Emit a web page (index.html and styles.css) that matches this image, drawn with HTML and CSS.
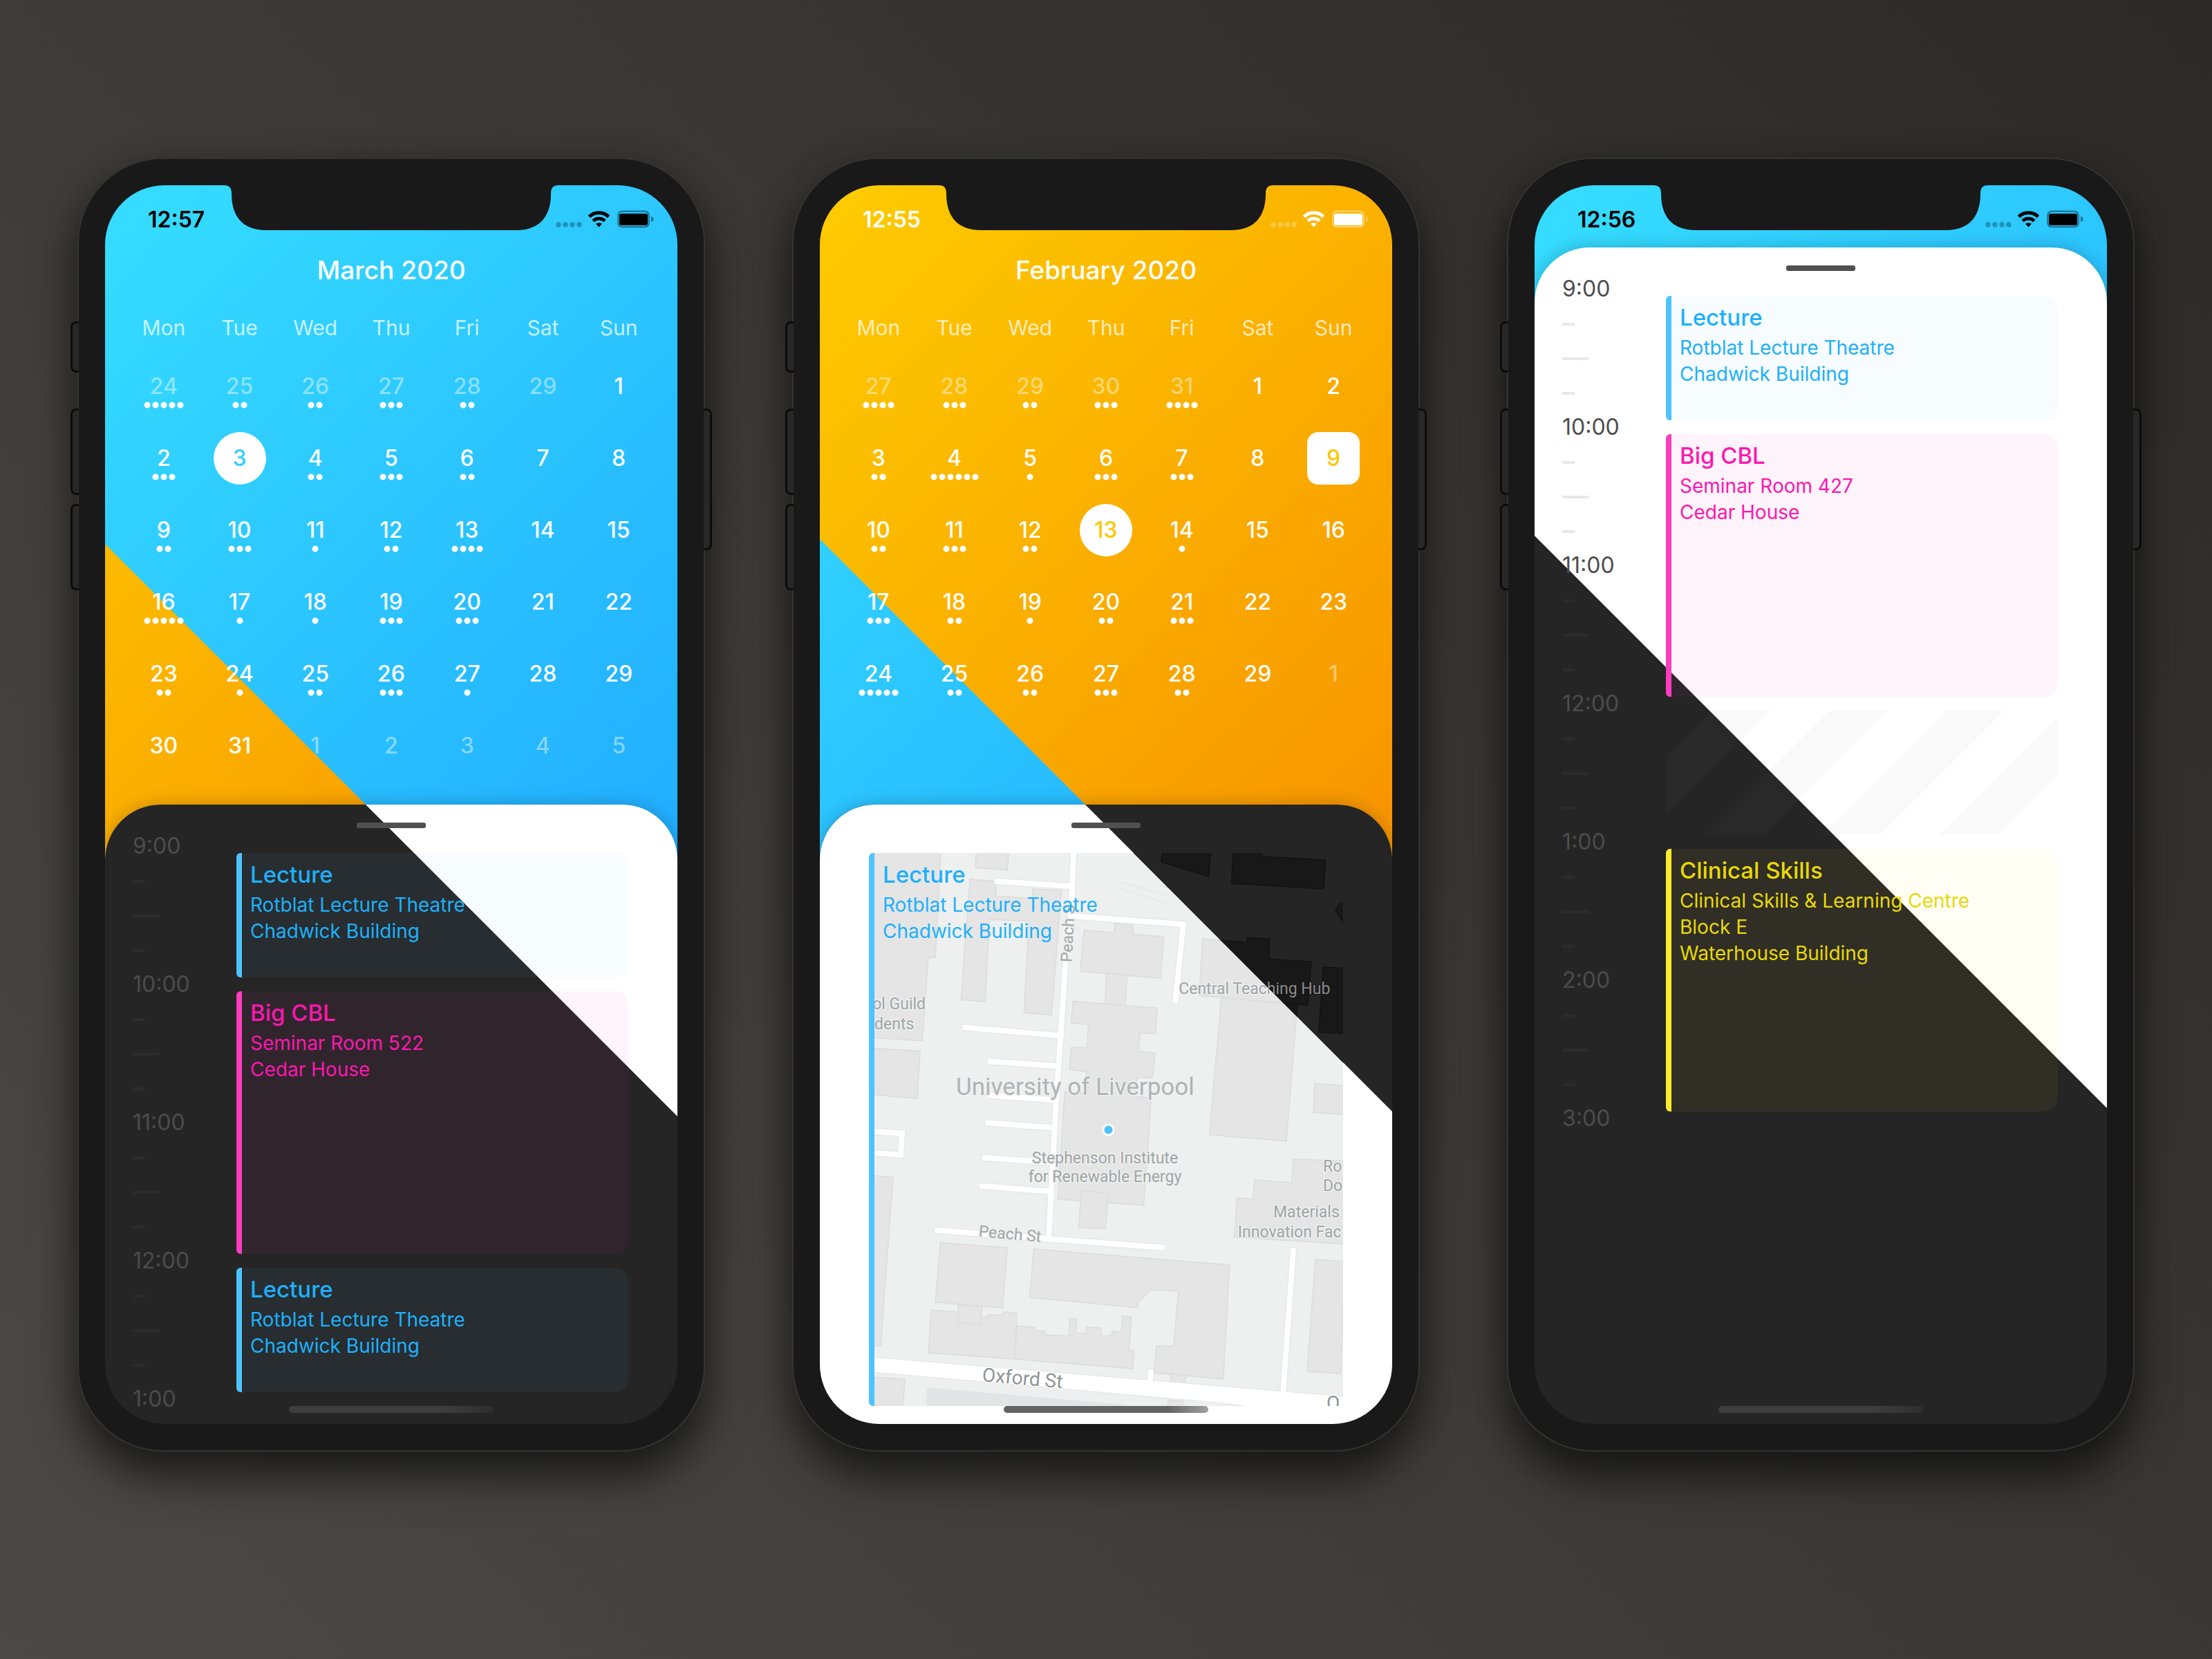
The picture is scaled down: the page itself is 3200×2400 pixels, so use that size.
FILE: index.html
```html
<!DOCTYPE html>
<html lang="en">
<head>
<meta charset="utf-8">
<title>Timetable themes</title>
<link rel="stylesheet" href="styles.css">
</head>
<body>
<svg class="defs" aria-hidden="true">
  <symbol id="notch" viewBox="0 0 484 66">
    <path d="M0 0C8 0 11 4 11 12C11 42 24 65 62 65H422C460 65 473 42 473 12C473 4 476 0 484 0Z"/>
  </symbol>
  <symbol id="status" viewBox="0 0 142 26">
    <g fill="currentColor" opacity=".28"><circle cx="4" cy="21" r="3.7"/><circle cx="14" cy="21" r="3.7"/><circle cx="24" cy="21" r="3.7"/><circle cx="34" cy="21" r="3.7"/></g>
    <path d="M48.500 9.500A20 20 0 0 1 76.500 9.500" fill="none" stroke="currentColor" stroke-width="5"/>
    <path d="M54 15.500A12.500 12.500 0 0 1 71 15.500" fill="none" stroke="currentColor" stroke-width="4.600"/>
    <path d="M58 19.800Q62.500 16.500 67 19.800L62.500 24.500Z" fill="currentColor"/>
    <path d="M97 .5H128Q136 .5 136 8.500V17.500Q136 25.500 128 25.500H97Q89 25.500 89 17.500V8.500Q89 .5 97 .5ZM97 3Q91.500 3 91.500 8.500V17.500Q91.500 23 97 23H128Q133.500 23 133.500 17.500V8.500Q133.500 3 128 3Z" fill="currentColor" fill-rule="evenodd" opacity=".38"/>
    <rect x="92" y="5" width="41" height="17" rx="3" fill="currentColor"/>
    <path d="M138 9Q141.500 10 141.500 13T138 17Z" fill="currentColor" opacity=".4"/>
  </symbol>
  <symbol id="campus" viewBox="0 0 677 800">
    <rect class="ground" width="677" height="800"/>
    <path class="park" d="M76 772L364 797V800H75Z"/>
    <path class="faint" d="M353 41L424 62M353 51L422 73M408 46L424 50"/>
    <g class="building">
      <path d="M-2 -2H82L96 3L88 151L78 151L69 271L-2 267Z"/>
      <path d="M147 -2H194L192 25L146 21Z"/>
      <path d="M138 38L176 41L175 62L227 66L229 52L270 54L256 234L216 231L223 98L166 96L160 215L125 212Z"/>
      <path d="M-2 282L66 286L62 355L-2 349Z"/>
      <path d="M-2 466L27 468L9 712H-2Z"/>
      <path d="M-2 757L44 760L41 802H-2Z"/>
      <path d="M303 111L346 115L347 102L374 103L373 117L418 121L413 181L297 171Z"/>
      <path d="M335 174L365 176L362 221L333 219Z"/>
      <path d="M287 214L409 224L406 261L384 260L381 286L405 289L402 325L379 324L378 352L400 354L389 509L265 500L275 345L304 347L306 316L282 313L284 281L307 281L309 248L284 246Z"/>
      <path d="M299 488L338 491L334 543L295 541Z"/>
      <path d="M501 209L611 219L595 416L484 407Z"/>
      <path d="M474 124L539 129V122L571 124L570 153L631 157L626 220L469 206Z"/>
      <path d="M648 165L679 166V261L642 259Z"/>
      <path d="M416 -2H486L483 34L414 13Z"/>
      <path d="M518 -2H560V5L652 10L649 52L516 44Z"/>
      <path d="M672 73H679V105L666 83Z"/>
      <path d="M636 333L679 336V378L634 375Z"/>
      <path d="M605 442L679 445V565L520 555L524 498L547 500L549 472L603 476Z"/>
      <path d="M637 587L679 590L674 752L625 749Z"/>
      <path d="M95 563L192 570L185 657L88 649Z"/>
      <path d="M230 572L513 595L504 760L404 751L407 712L432 712L439 633L399 631L381 649V657L224 642Z"/>
      <path d="M82 660L121 663L156 670H164V667L185 667V663L206 665L202 731L78 722Z"/>
      <path d="M121 653L156 655L153 681L121 679Z"/>
      <path d="M206 683L231 685V689L246 691V696L281 698L282 672L292 673L291 694H306V685L327 686V698L343 697V691L357 692L358 669L371 670L368 718L375 719L373 745L202 731Z"/>
      <path d="M429 752L450 755L448 768H428Z"/>
    </g>
    <path class="casing" d="M288 -5L284 86L276 160L262 366L252 553M177 41L283 48M288 91L446 103L435 214M131 252L270 264M167 301L266 308M166 350L262 357M164 390L260 397M159 440L256 447M155 481L254 489M91 545L416 570M605 574L590 785M399 750L398 768M-5 402L40 405L38 436L-5 433"/>
    <path class="oxford" d="M-2 728L586 777L679 785V802H560L484 793L-2 750Z"/>
    <path class="road" d="M288 -5L284 86L276 160L262 366L252 553M177 41L283 48M288 91L446 103L435 214M131 252L270 264M167 301L266 308M166 350L262 357M164 390L260 397M159 440L256 447M155 481L254 489M91 545L416 570M605 574L590 785M399 750L398 768M-5 402L40 405L38 436L-5 433"/>
    <path class="building" d="M424 790L446 792V802H424Z"/>
  </symbol>
</svg>

<main class="stage">
  <section class="phone" aria-label="March timetable">
    <span class="key key-mute"></span><span class="key key-up"></span><span class="key key-down"></span><span class="key key-power"></span>
    <div class="screen blue split-a">
      <svg class="notch"><use href="#notch"/></svg>
      <header class="status-bar"><time>12:57</time><svg class="status-icons"><use href="#status"/></svg></header>
      <div class="calendar">
        <h1 class="month">March 2020</h1>
        <table class="days">
          <thead><tr><th>Mon</th><th>Tue</th><th>Wed</th><th>Thu</th><th>Fri</th><th>Sat</th><th>Sun</th></tr></thead>
          <tbody>
            <tr><td><button class="day out d5">24</button></td><td><button class="day out d2">25</button></td><td><button class="day out d2">26</button></td><td><button class="day out d3">27</button></td><td><button class="day out d2">28</button></td><td><button class="day out">29</button></td><td><button class="day">1</button></td></tr>
            <tr><td><button class="day d3">2</button></td><td><button class="day selected">3</button></td><td><button class="day d2">4</button></td><td><button class="day d3">5</button></td><td><button class="day d2">6</button></td><td><button class="day">7</button></td><td><button class="day">8</button></td></tr>
            <tr><td><button class="day d2">9</button></td><td><button class="day d3">10</button></td><td><button class="day d1">11</button></td><td><button class="day d2">12</button></td><td><button class="day d4">13</button></td><td><button class="day">14</button></td><td><button class="day">15</button></td></tr>
            <tr><td><button class="day d5">16</button></td><td><button class="day d1">17</button></td><td><button class="day d1">18</button></td><td><button class="day d3">19</button></td><td><button class="day d3">20</button></td><td><button class="day">21</button></td><td><button class="day">22</button></td></tr>
            <tr><td><button class="day d2">23</button></td><td><button class="day d1">24</button></td><td><button class="day d2">25</button></td><td><button class="day d3">26</button></td><td><button class="day d1">27</button></td><td><button class="day">28</button></td><td><button class="day">29</button></td></tr>
            <tr><td><button class="day">30</button></td><td><button class="day">31</button></td><td><button class="day out">1</button></td><td><button class="day out">2</button></td><td><button class="day out">3</button></td><td><button class="day out">4</button></td><td><button class="day out">5</button></td></tr>
          </tbody>
        </table>
      </div>
      <div class="sheet">
        <div class="grabber"></div>
        <div class="plan">
          <ol class="hours"><li>9:00</li><li>10:00</li><li>11:00</li><li>12:00</li><li>1:00</li></ol>
          <div class="events">
            <article class="event lecture"><h2>Lecture</h2><p>Rotblat Lecture Theatre</p><p>Chadwick Building</p></article>
            <article class="event cbl long"><h2>Big CBL</h2><p>Seminar Room 522</p><p>Cedar House</p></article>
            <article class="event lecture"><h2>Lecture</h2><p>Rotblat Lecture Theatre</p><p>Chadwick Building</p></article>
          </div>
        </div>
      </div>
      <div class="home"></div>
    </div>
  </section>

  <section class="phone" aria-label="February timetable">
    <span class="key key-mute"></span><span class="key key-up"></span><span class="key key-down"></span><span class="key key-power"></span>
    <div class="screen orange split-b">
      <svg class="notch"><use href="#notch"/></svg>
      <header class="status-bar"><time>12:55</time><svg class="status-icons"><use href="#status"/></svg></header>
      <div class="calendar">
        <h1 class="month">February 2020</h1>
        <table class="days">
          <thead><tr><th>Mon</th><th>Tue</th><th>Wed</th><th>Thu</th><th>Fri</th><th>Sat</th><th>Sun</th></tr></thead>
          <tbody>
            <tr><td><button class="day out d4">27</button></td><td><button class="day out d3">28</button></td><td><button class="day out d2">29</button></td><td><button class="day out d3">30</button></td><td><button class="day out d4">31</button></td><td><button class="day">1</button></td><td><button class="day">2</button></td></tr>
            <tr><td><button class="day d2">3</button></td><td><button class="day d6">4</button></td><td><button class="day d1">5</button></td><td><button class="day d3">6</button></td><td><button class="day d3">7</button></td><td><button class="day">8</button></td><td><button class="day today">9</button></td></tr>
            <tr><td><button class="day d2">10</button></td><td><button class="day d3">11</button></td><td><button class="day d2">12</button></td><td><button class="day selected">13</button></td><td><button class="day d1">14</button></td><td><button class="day">15</button></td><td><button class="day">16</button></td></tr>
            <tr><td><button class="day d3">17</button></td><td><button class="day d2">18</button></td><td><button class="day d1">19</button></td><td><button class="day d2">20</button></td><td><button class="day d3">21</button></td><td><button class="day">22</button></td><td><button class="day">23</button></td></tr>
            <tr><td><button class="day d5">24</button></td><td><button class="day d2">25</button></td><td><button class="day d2">26</button></td><td><button class="day d3">27</button></td><td><button class="day d2">28</button></td><td><button class="day">29</button></td><td><button class="day out">1</button></td></tr>
          </tbody>
        </table>
      </div>
      <div class="sheet">
        <div class="grabber"></div>
        <article class="event lecture place">
          <svg class="map" viewBox="0 0 677 800" preserveAspectRatio="xMinYMin slice" role="img" aria-label="Campus map">
            <clipPath id="lower"><path d="M0 0H374L677 303V800H0Z"/></clipPath>
            <clipPath id="upper"><path d="M374 0H677V303Z"/></clipPath>
            <g clip-path="url(#lower)"><use class="map-light" href="#campus" width="677" height="800"/></g>
            <g clip-path="url(#upper)"><use class="map-dark" href="#campus" width="677" height="800"/></g>
            <circle cx="338" cy="400" r="9" fill="#fff"/><circle cx="338" cy="400" r="6" fill="#4dc3ff"/>
            <g class="labels">
              <text class="area" x="290" y="349" text-anchor="middle">University of Liverpool</text>
              <g clip-path="url(#lower)"><text x="549" y="204" text-anchor="middle">Central Teaching Hub</text></g>
              <g clip-path="url(#upper)" aria-hidden="true"><text class="night" x="549" y="204" text-anchor="middle">Central Teaching Hub</text></g>
              <text x="333" y="448" text-anchor="middle">Stephenson Institute</text>
              <text x="333" y="475" text-anchor="middle">for Renewable Energy</text>
              <text x="648" y="460">Ro</text>
              <text x="648" y="488">Do</text>
              <text x="624" y="526" text-anchor="middle">Materials</text>
              <text x="525" y="555">Innovation Fac</text>
              <text x="74" y="226" text-anchor="end">ol Guild</text>
              <text x="0" y="255">dents</text>
              <text transform="translate(150 554) rotate(5)">Peach St</text>
              <text transform="translate(285 158) rotate(-87)">Peach S</text>
              <text class="street" transform="translate(155 763) rotate(5)">Oxford St</text>
              <text class="street" x="653" y="804">O</text>
            </g>
          </svg>
          <h2>Lecture</h2><p>Rotblat Lecture Theatre</p><p>Chadwick Building</p>
        </article>
      </div>
      <div class="home home-light"></div>
    </div>
  </section>

  <section class="phone" aria-label="Day timetable">
    <span class="key key-mute"></span><span class="key key-up"></span><span class="key key-down"></span><span class="key key-power"></span>
    <div class="screen blue split-c">
      <svg class="notch"><use href="#notch"/></svg>
      <header class="status-bar"><time>12:56</time><svg class="status-icons"><use href="#status"/></svg></header>
      <div class="sheet">
        <div class="grabber"></div>
        <div class="plan">
          <ol class="hours"><li>9:00</li><li>10:00</li><li>11:00</li><li>12:00</li><li>1:00</li><li>2:00</li><li>3:00</li></ol>
          <div class="events">
            <article class="event lecture"><h2>Lecture</h2><p>Rotblat Lecture Theatre</p><p>Chadwick Building</p></article>
            <article class="event cbl long"><h2>Big CBL</h2><p>Seminar Room 427</p><p>Cedar House</p></article>
            <div class="free"></div>
            <article class="event skills long"><h2>Clinical Skills</h2><p>Clinical Skills &amp; Learning Centre</p><p>Block E</p><p>Waterhouse Building</p></article>
          </div>
        </div>
      </div>
      <div class="home"></div>
    </div>
  </section>
</main>
</body>
</html>
```

FILE: styles.css
```css
* { box-sizing: border-box; margin: 0; padding: 0; }

body {
  min-height: 100vh;
  font-family: Inter, "Liberation Sans", sans-serif;
  color: #fff;
  background: linear-gradient(45deg, #4a4947 0%, #2b2a29 100%);
}

.defs { position: absolute; width: 0; height: 0; }

.stage {
  display: grid;
  grid-template-columns: repeat(3, 1fr);
  gap: 126px;
  align-items: start;
  padding: 228px 112px;
}

/* Device frame */
.phone {
  position: relative;
  padding: 38px;
  border: 2px solid #343433;
  border-radius: 124px;
  background: #191919;
  box-shadow: 0 40px 60px rgba(0, 0, 0, .5), 0 10px 50px rgba(0, 0, 0, .25);
}
.key {
  position: absolute;
  left: -12px;
  width: 12px;
  border: 3px solid #0c0c0c;
  border-right: 0;
  border-radius: 8px 0 0 8px;
  background: #282828;
}
.key-mute { top: 235px; height: 74px; }
.key-up { top: 361px; height: 125px; }
.key-down { top: 499px; height: 125px; }
.key-power {
  left: auto;
  right: -12px;
  top: 361px;
  height: 205px;
  border: 3px solid #0c0c0c;
  border-left: 0;
  border-radius: 0 8px 8px 0;
}

/* Screen: two themes meet along a diagonal that starts at --split on the left edge */
.screen {
  position: relative;
  display: flex;
  flex-direction: column;
  container-type: inline-size;
  aspect-ratio: 828 / 1792;
  overflow: hidden;
  border-radius: 86px;
  background: var(--base) no-repeat 0 0 / 100% 972px;
}
.screen::before {
  content: "";
  position: absolute;
  inset: 0 0 auto;
  height: 972px;
  background: var(--alt);
  clip-path: polygon(0 var(--split), 100% calc(var(--split) + 100cqw), 0 calc(var(--split) + 100cqw));
}
.blue {
  --base: linear-gradient(135deg, #36deff, #21adff);
  --alt: linear-gradient(135deg, #fecc00, #f79300);
  --accent: #33cfff;
  --bar: #000;
}
.orange {
  --base: linear-gradient(135deg, #fecc00, #f79300);
  --alt: linear-gradient(135deg, #36deff, #21adff);
  --accent: #fdc800;
  --bar: #fff;
}
.split-a { --split: 519px; --sheet-split: -377px; --sheet: #fff; --sheet-alt: #252525; }
.split-b { --split: 512px; --sheet-split: -384px; --sheet: #252525; --sheet-alt: #fff; }
.split-c { --split: 2000px; --sheet-split: 417px; --sheet: #fff; --sheet-alt: #252525; }

.notch {
  position: absolute;
  top: 0;
  left: 50%;
  width: 484px;
  height: 66px;
  transform: translateX(-50%);
  fill: #191919;
}
.status-bar {
  position: relative;
  display: flex;
  justify-content: space-between;
  align-items: center;
  height: 90px;
  padding: 8px 34px 0 62px;
  color: var(--bar);
  font-size: 32px;
  font-weight: 600;
}
.status-icons { width: 142px; height: 26px; }

/* Calendar */
.calendar { position: relative; height: 806px; padding: 0 30px; }
.month {
  height: 66px;
  margin-bottom: 18px;
  font-size: 37px;
  font-weight: 500;
  line-height: 66px;
  text-align: center;
}
.days { width: 100%; table-layout: fixed; border-collapse: collapse; }
.days th {
  height: 65px;
  padding-bottom: 2px;
  font-size: 30px;
  font-weight: 400;
  opacity: .72;
}
.days td { height: 104px; }
.day {
  position: relative;
  display: block;
  width: 76px;
  height: 76px;
  margin: 0 auto;
  border: 0;
  background: none;
  color: #fff;
  font: 500 32px/76px Inter, "Liberation Sans", sans-serif;
  text-align: center;
}
.out { color: rgba(255, 255, 255, .45); }
.selected, .today { background: #fff; color: var(--accent); }
.selected { border-radius: 50%; }
.today { border-radius: 16px; }
.day::after {
  content: "";
  position: absolute;
  top: 59px;
  left: 50%;
  height: 12px;
  transform: translateX(-50%);
  background: radial-gradient(circle at 6px 6px, #fff 4px, transparent 5px) 0 0 / 12px 12px;
}
.d1::after { width: 12px; }
.d2::after { width: 24px; }
.d3::after { width: 36px; }
.d4::after { width: 48px; }
.d5::after { width: 60px; }
.d6::after { width: 72px; }

/* Sheet */
.sheet {
  position: relative;
  display: flow-root;
  flex: 1;
  border-radius: 80px 80px 0 0;
  background: linear-gradient(var(--sheet) 0 0) no-repeat 0 0 / 100% calc(var(--sheet-split) + 100cqw);
  box-shadow: 0 0 24px rgba(0, 0, 0, .22);
}
.sheet::before {
  content: "";
  position: absolute;
  inset: 0;
  border-radius: inherit;
  background: var(--sheet-alt);
  clip-path: polygon(0 var(--sheet-split), 100% calc(var(--sheet-split) + 100cqw), 100% 100%, 0 100%);
}
.grabber {
  position: relative;
  width: 100px;
  height: 8px;
  margin: 26px auto 6px;
  border-radius: 3px;
  background: #505050;
}
.plan {
  position: relative;
  display: grid;
  grid-template-columns: 150px 1fr;
  padding: 0 71px 0 40px;
}
.hours { list-style: none; }
.hours li {
  height: 200px;
  color: #4c4c4c;
  font-size: 32px;
  line-height: 40px;
  background:
    linear-gradient(rgba(88, 88, 88, .14) 0 0) 0 69px / 18px 4px,
    linear-gradient(rgba(88, 88, 88, .14) 0 0) 0 119px / 38px 4px,
    linear-gradient(rgba(88, 88, 88, .14) 0 0) 0 169px / 18px 4px;
  background-repeat: no-repeat;
}
.hours li:last-child { height: 40px; background: none; }
.events { display: flex; flex-direction: column; gap: 20px; padding-top: 30px; }

.event {
  position: relative;
  height: 180px;
  padding: 9px 12px;
  overflow: hidden;
  border-left: 8px solid var(--edge);
  border-radius: 6px 20px 20px 6px;
  background: var(--tint);
  color: var(--ink);
}
.long { height: 380px; }
.event h2 { position: relative; margin-bottom: 3px; font-size: 33px; font-weight: 500; line-height: 44px; }
.event p { position: relative; font-size: 28px; line-height: 38px; }
.lecture { --edge: #4dc3ff; --ink: #1eb0fb; --tint: rgba(77, 195, 255, .05); }
.cbl { --edge: #ff3dbe; --ink: #fc17b0; --tint: rgba(255, 61, 190, .055); }
.skills { --edge: #ffeb2e; --ink: #e8d908; --tint: rgba(255, 225, 40, .05); }

.free {
  height: 180px;
  border-radius: 20px;
  background: repeating-linear-gradient(135deg, transparent 0 47px, rgba(128, 128, 128, .04) 47px 107px, transparent 107px 120px);
}

/* Map card */
.place { height: 800px; margin: 36px 71px 0; border-radius: 6px 0 0 6px; background: none; }
.map { position: absolute; inset: 0; width: 100%; height: 100%; }
.map-light { --ground: #eef0f0; --block: #e5e5e5; --block-edge: #dcdcdc; --road: #fff; --case: #e8e8e8; --park: #e1e5e6; }
.map-dark { --ground: #252525; --block: #181818; --block-edge: #131313; --road: #252525; --case: #252525; --park: #252525; }
.ground { fill: var(--ground); }
.park { fill: var(--park); }
.faint { fill: none; stroke: var(--case); stroke-width: 2; }
.building { fill: var(--block); stroke: var(--block-edge); stroke-width: 1.5; }
.oxford { fill: var(--road); stroke: var(--case); stroke-width: 1.5; }
.casing { fill: none; stroke: var(--case); stroke-width: 11; stroke-linecap: round; }
.road { fill: none; stroke: var(--road); stroke-width: 8; stroke-linecap: round; }
.labels {
  font: 400 23px Roboto, "Liberation Sans", sans-serif;
  fill: #a0a5a5;
  stroke: #eef0f0;
  stroke-width: 3;
  stroke-linejoin: round;
  paint-order: stroke;
}
.labels .area { font-size: 35px; fill: #b0b4b4; }
.labels .street { font-size: 28px; fill: #8f9595; stroke: #fff; }
.labels .night { fill: #8a8a8a; stroke: #181818; }

.home {
  position: absolute;
  left: 50%;
  bottom: 16px;
  width: 296px;
  height: 10px;
  transform: translateX(-50%);
  border-radius: 5px;
  background: linear-gradient(90deg, #3e3e3e 75%, #2e2e2e);
}
.home-light { background: linear-gradient(90deg, #636363 80%, #a0a0a0); }
```
